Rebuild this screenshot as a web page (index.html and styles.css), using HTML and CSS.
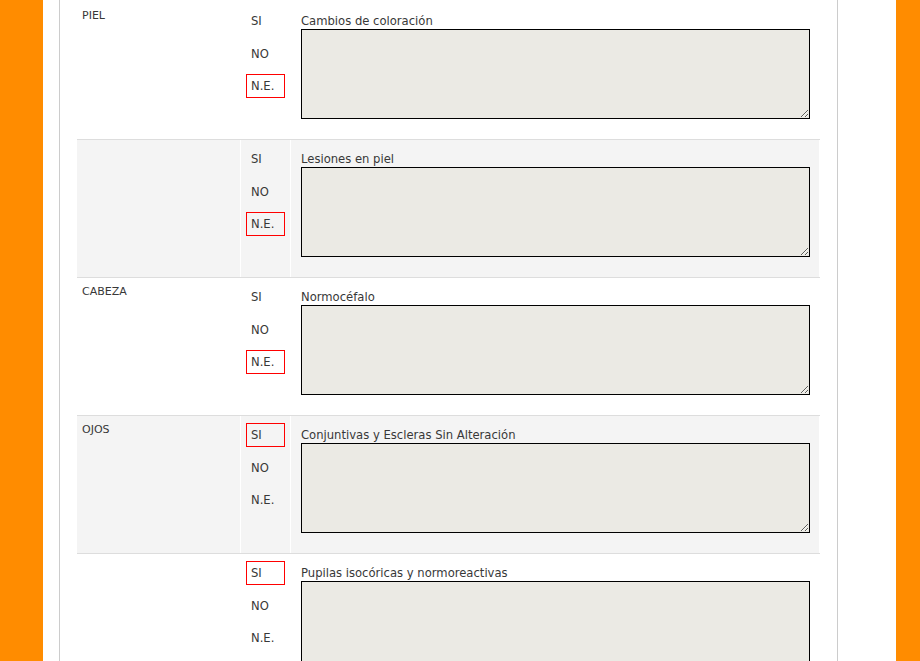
FILE: index.html
```html
<!DOCTYPE html>
<html lang="es">
<head>
<meta charset="utf-8">
<title>Exploración física</title>
<link rel="stylesheet" href="styles.css">
</head>
<body>
<div class="page">
  <div class="panel">
    <div class="table">
      <div class="row">
        <div class="cell name">PIEL</div>
        <div class="cell opts">
          <span class="opt">SI</span>
          <span class="opt">NO</span>
          <span class="opt sel">N.E.</span>
        </div>
        <div class="cell obs">
          <div class="lbl">Cambios de coloración</div>
          <textarea class="ta"></textarea>
        </div>
      </div>
      <div class="row alt">
        <div class="cell name"></div>
        <div class="cell opts">
          <span class="opt">SI</span>
          <span class="opt">NO</span>
          <span class="opt sel">N.E.</span>
        </div>
        <div class="cell obs">
          <div class="lbl">Lesiones en piel</div>
          <textarea class="ta"></textarea>
        </div>
      </div>
      <div class="row">
        <div class="cell name">CABEZA</div>
        <div class="cell opts">
          <span class="opt">SI</span>
          <span class="opt">NO</span>
          <span class="opt sel">N.E.</span>
        </div>
        <div class="cell obs">
          <div class="lbl">Normocéfalo</div>
          <textarea class="ta"></textarea>
        </div>
      </div>
      <div class="row alt">
        <div class="cell name">OJOS</div>
        <div class="cell opts">
          <span class="opt sel">SI</span>
          <span class="opt">NO</span>
          <span class="opt">N.E.</span>
        </div>
        <div class="cell obs">
          <div class="lbl">Conjuntivas y Escleras Sin Alteración</div>
          <textarea class="ta"></textarea>
        </div>
      </div>
      <div class="row">
        <div class="cell name"></div>
        <div class="cell opts">
          <span class="opt sel">SI</span>
          <span class="opt">NO</span>
          <span class="opt">N.E.</span>
        </div>
        <div class="cell obs">
          <div class="lbl">Pupilas isocóricas y normoreactivas</div>
          <textarea class="ta"></textarea>
        </div>
      </div>
    </div>
  </div>
</div>
</body>
</html>
```

FILE: styles.css
```css
html, body {
  margin: 0;
  padding: 0;
  height: 100%;
  overflow: hidden;
}
body {
  background: #ff8c00;
  font-family: "DejaVu Sans", Verdana, sans-serif;
  color: #383838;
}
.page {
  margin: 0 24px 0 43px;
  background: #fff;
  padding: 0 58px 0 16px;
  min-height: 100%;
}
.panel {
  border-left: 1px solid #ccc;
  border-right: 1px solid #ccc;
  padding: 0 17px 0 17px;
  min-height: 661px;
}
.table {
  padding-top: 1px;
}
.row {
  display: grid;
  grid-template-columns: 163px 49px 528px;
  column-gap: 1px;
  border-top: 1px solid #ddd;
  height: 137px;
}
.row:first-child {
  border-top-color: #fff;
}
.row.alt .cell {
  background: #f4f4f4;
}
.cell {
  box-sizing: border-box;
  padding-top: 7px;
}
.name {
  font-size: 11px;
  padding-left: 5px;
}
.opts {
  padding-left: 5px;
  display: flex;
  flex-direction: column;
  align-items: flex-start;
}
.opt {
  display: block;
  box-sizing: border-box;
  width: 39px;
  height: 24px;
  line-height: 21px;
  padding-top: 1px;
  font-size: 11.6px;
  padding-left: 4px;
  border: 1px solid transparent;
  margin-bottom: 8px;
}
.opt:first-child {
  margin-bottom: 9px;
}
.opt.sel {
  border-color: #f00;
}
.obs {
  padding-left: 10px;
}
.lbl {
  font-size: 11.6px;
  line-height: 15px;
  padding-top: 5px;
}
.ta {
  display: block;
  margin: 0;
  box-sizing: border-box;
  width: 509px;
  height: 90px;
  border: 1px solid #000;
  background: #ebeae4;
  padding: 2px;
}
```
